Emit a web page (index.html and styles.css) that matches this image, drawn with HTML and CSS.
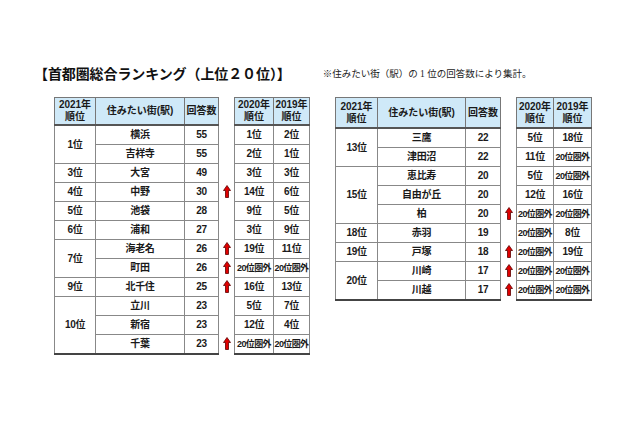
FILE: index.html
```html
<!DOCTYPE html>
<html lang="ja">
<head>
<meta charset="utf-8">
<link rel="stylesheet" href="styles.css">
</head>
<body>
<div class="page">
  <div class="head">
    <h1 class="title">【首都圏総合ランキング（上位２０位）】</h1>
    <p class="note">※住みたい街（駅）の 1 位の回答数により集計。</p>
  </div>
  <div class="tables">
    <div class="group left">
      <table class="main">
        <colgroup><col class="c-rank"><col class="c-name"><col class="c-num"></colgroup>
        <thead><tr><th>2021年<br>順位</th><th>住みたい街(駅)</th><th>回答数</th></tr></thead>
        <tbody>
          <tr><td rowspan="2">1位</td><td>横浜</td><td>55</td></tr>
          <tr><td>吉祥寺</td><td>55</td></tr>
          <tr><td>3位</td><td>大宮</td><td>49</td></tr>
          <tr><td>4位</td><td>中野</td><td>30</td></tr>
          <tr><td>5位</td><td>池袋</td><td>28</td></tr>
          <tr><td>6位</td><td>浦和</td><td>27</td></tr>
          <tr><td rowspan="2">7位</td><td>海老名</td><td>26</td></tr>
          <tr><td>町田</td><td>26</td></tr>
          <tr><td>9位</td><td>北千住</td><td>25</td></tr>
          <tr><td rowspan="3">10位</td><td>立川</td><td>23</td></tr>
          <tr><td>新宿</td><td>23</td></tr>
          <tr><td>千葉</td><td>23</td></tr>
        </tbody>
      </table>
      <div class="arrows">
        <div class="ahead"></div>
        <div class="arow"></div>
        <div class="arow"></div>
        <div class="arow"></div>
        <div class="arow"><svg class="up" viewBox="0 0 8 13"><path d="M4 0.5 L7.5 5.5 L5.5 5.5 L5.5 12.5 L2.5 12.5 L2.5 5.5 L0.5 5.5 Z"/></svg></div>
        <div class="arow"></div>
        <div class="arow"></div>
        <div class="arow"><svg class="up" viewBox="0 0 8 13"><path d="M4 0.5 L7.5 5.5 L5.5 5.5 L5.5 12.5 L2.5 12.5 L2.5 5.5 L0.5 5.5 Z"/></svg></div>
        <div class="arow"><svg class="up" viewBox="0 0 8 13"><path d="M4 0.5 L7.5 5.5 L5.5 5.5 L5.5 12.5 L2.5 12.5 L2.5 5.5 L0.5 5.5 Z"/></svg></div>
        <div class="arow"><svg class="up" viewBox="0 0 8 13"><path d="M4 0.5 L7.5 5.5 L5.5 5.5 L5.5 12.5 L2.5 12.5 L2.5 5.5 L0.5 5.5 Z"/></svg></div>
        <div class="arow"></div>
        <div class="arow"></div>
        <div class="arow"><svg class="up" viewBox="0 0 8 13"><path d="M4 0.5 L7.5 5.5 L5.5 5.5 L5.5 12.5 L2.5 12.5 L2.5 5.5 L0.5 5.5 Z"/></svg></div>
      </div>
      <table class="past">
        <colgroup><col class="c-p1"><col class="c-p2"></colgroup>
        <thead><tr><th>2020年<br>順位</th><th>2019年<br>順位</th></tr></thead>
        <tbody>
          <tr><td>1位</td><td>2位</td></tr>
          <tr><td>2位</td><td>1位</td></tr>
          <tr><td>3位</td><td>3位</td></tr>
          <tr><td>14位</td><td>6位</td></tr>
          <tr><td>9位</td><td>5位</td></tr>
          <tr><td>3位</td><td>9位</td></tr>
          <tr><td>19位</td><td>11位</td></tr>
          <tr><td class="out">20位圏外</td><td class="out">20位圏外</td></tr>
          <tr><td>16位</td><td>13位</td></tr>
          <tr><td>5位</td><td>7位</td></tr>
          <tr><td>12位</td><td>4位</td></tr>
          <tr><td class="out">20位圏外</td><td class="out">20位圏外</td></tr>
        </tbody>
      </table>
    </div>

    <div class="group right">
      <table class="main">
        <colgroup><col class="c-rank"><col class="c-name"><col class="c-num"></colgroup>
        <thead><tr><th>2021年<br>順位</th><th>住みたい街(駅)</th><th>回答数</th></tr></thead>
        <tbody>
          <tr><td rowspan="2">13位</td><td>三鷹</td><td>22</td></tr>
          <tr><td>津田沼</td><td>22</td></tr>
          <tr><td rowspan="3">15位</td><td>恵比寿</td><td>20</td></tr>
          <tr><td>自由が丘</td><td>20</td></tr>
          <tr><td>柏</td><td>20</td></tr>
          <tr><td>18位</td><td>赤羽</td><td>19</td></tr>
          <tr><td>19位</td><td>戸塚</td><td>18</td></tr>
          <tr><td rowspan="2">20位</td><td>川崎</td><td>17</td></tr>
          <tr><td>川越</td><td>17</td></tr>
        </tbody>
      </table>
      <div class="arrows">
        <div class="ahead"></div>
        <div class="arow"></div>
        <div class="arow"></div>
        <div class="arow"></div>
        <div class="arow"></div>
        <div class="arow"><svg class="up" viewBox="0 0 8 13"><path d="M4 0.5 L7.5 5.5 L5.5 5.5 L5.5 12.5 L2.5 12.5 L2.5 5.5 L0.5 5.5 Z"/></svg></div>
        <div class="arow"></div>
        <div class="arow"><svg class="up" viewBox="0 0 8 13"><path d="M4 0.5 L7.5 5.5 L5.5 5.5 L5.5 12.5 L2.5 12.5 L2.5 5.5 L0.5 5.5 Z"/></svg></div>
        <div class="arow"><svg class="up" viewBox="0 0 8 13"><path d="M4 0.5 L7.5 5.5 L5.5 5.5 L5.5 12.5 L2.5 12.5 L2.5 5.5 L0.5 5.5 Z"/></svg></div>
        <div class="arow"><svg class="up" viewBox="0 0 8 13"><path d="M4 0.5 L7.5 5.5 L5.5 5.5 L5.5 12.5 L2.5 12.5 L2.5 5.5 L0.5 5.5 Z"/></svg></div>
      </div>
      <table class="past">
        <colgroup><col class="c-p1"><col class="c-p2"></colgroup>
        <thead><tr><th>2020年<br>順位</th><th>2019年<br>順位</th></tr></thead>
        <tbody>
          <tr><td>5位</td><td>18位</td></tr>
          <tr><td>11位</td><td class="out">20位圏外</td></tr>
          <tr><td>5位</td><td class="out">20位圏外</td></tr>
          <tr><td>12位</td><td>16位</td></tr>
          <tr><td class="out">20位圏外</td><td class="out">20位圏外</td></tr>
          <tr><td class="out">20位圏外</td><td>8位</td></tr>
          <tr><td class="out">20位圏外</td><td>19位</td></tr>
          <tr><td class="out">20位圏外</td><td class="out">20位圏外</td></tr>
          <tr><td class="out">20位圏外</td><td class="out">20位圏外</td></tr>
        </tbody>
      </table>
    </div>
  </div>
</div>
</body>
</html>
```

FILE: styles.css
```css
html, body {
  margin: 0;
  padding: 0;
  background: #ffffff;
}

.page {
  width: 640px;
  height: 426px;
  box-sizing: border-box;
  padding: 63px 0 0 34px;
  font-family: "Liberation Sans", "Noto Sans CJK JP", sans-serif;
  color: #1a1a1a;
}

.head {
  display: flex;
  align-items: center;
  height: 20px;
}

.title {
  margin: 0;
  font-family: "Noto Sans CJK JP", sans-serif;
  font-size: 14px;
  font-weight: 700;
  letter-spacing: -0.1px;
  line-height: 20px;
  color: #111;
  white-space: nowrap;
}

.note {
  margin: 2px 0 0 32px;
  font-family: "Liberation Serif", "Noto Sans CJK JP", serif;
  font-size: 9.5px;
  font-weight: 400;
  line-height: 20px;
  color: #222;
  white-space: nowrap;
}

.tables {
  display: flex;
  margin: 14px 0 0 20px;
  gap: 25px;
}

.group {
  display: flex;
  align-items: flex-start;
}

table {
  border-collapse: collapse;
  table-layout: fixed;
  border: 1px solid #777;
  border-bottom: 2px solid #444;
  font-size: 10px;
  font-weight: 700;
}

th {
  background: #cfe9f8;
  font-weight: 700;
  line-height: 12px;
  padding: 0;
  border: 1px solid #777;
  border-bottom: 2px solid #555;
  text-align: center;
  vertical-align: middle;
}

td {
  padding: 0;
  border: 1px solid #888;
  text-align: center;
  vertical-align: middle;
  line-height: 12px;
  white-space: nowrap;
  letter-spacing: -0.3px;
  overflow: hidden;
}

td.out {
  font-size: 9px;
  letter-spacing: -0.6px;
}

.left th { height: 26px; }
.right th { height: 29px; }
td { height: 18px; }

.left .main { width: 164px; }
.left .main .c-rank { width: 41px; }
.left .main .c-name { width: 89px; }
.left .main .c-num { width: 34px; }
.left .past { width: 75px; }
.left .past .c-p1 { width: 39px; }
.left .past .c-p2 { width: 36px; }

.right .main { width: 165px; }
.right .main .c-rank { width: 42px; }
.right .main .c-name { width: 88px; }
.right .main .c-num { width: 35px; }
.right .past { width: 75px; }
.right .past .c-p1 { width: 37px; }
.right .past .c-p2 { width: 38px; }

.arrows {
  width: 15px;
  display: flex;
  flex-direction: column;
}

.left .ahead { height: 28px; }
.right .ahead { height: 31px; }

.arow {
  height: 19px;
  display: flex;
  align-items: center;
  justify-content: center;
}

.up {
  width: 8px;
  height: 13px;
  display: block;
}

.up path {
  fill: #e00000;
  stroke: #5a0000;
  stroke-width: 0.8;
  stroke-linejoin: miter;
}
```
